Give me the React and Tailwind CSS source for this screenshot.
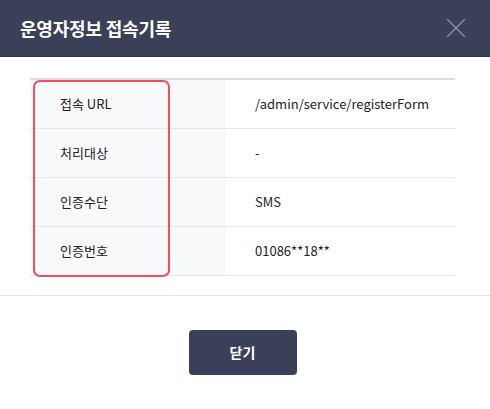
export default function App() {
  const rows = [
    ["접속 URL", "/admin/service/registerForm"],
    ["처리대상", "-"],
    ["인증수단", "SMS"],
    ["인증번호", "01086**18**"],
  ];
  const font = { fontFamily: '"Noto Sans CJK KR", "Noto Sans", sans-serif' };
  return (
    <div className="w-[490px] h-[409px] bg-white" style={font}>
      <div className="h-[57px] bg-[#3a4058] border-b border-[#2e3348] flex items-center justify-between pl-5 pr-[24px]">
        <h1 className="text-white text-[18px] font-bold tracking-[-0.2px]">운영자정보 접속기록</h1>
        <svg width="20" height="20" viewBox="0 0 20 20" className="block">
          <path d="M1 1 L19 19 M19 1 L1 19" stroke="#8d92a6" strokeWidth="1.4" fill="none" />
        </svg>
      </div>
      <div className="px-[30px] pt-[21px]">
        <div className="relative w-[425px] border-t-2 border-[#dcdcdc]">
          {rows.map(([k, v]) => (
            <div key={k} className="flex h-[49px] border-b border-[#e6e7ec]">
              <div className="w-[196px] bg-[#f8f9fb] flex items-center pl-[30px] text-[13px] text-[#222]">{k}</div>
              <div className="flex-1 flex items-center pl-[29px] text-[13px] text-[#222]">{v}</div>
            </div>
          ))}
          <div className="absolute left-[3px] top-[0px] w-[137px] h-[197px] border-2 border-[#ee4e5e] rounded-[7px]" />
        </div>
      </div>
      <div className="mt-[19px] border-t border-[#e3e3e6]" />
      <div className="flex justify-center pt-[34px] pr-[5px]">
        <button className="w-[108px] h-[45px] bg-[#3a4058] rounded-[4px] text-white text-[14px] font-bold">닫기</button>
      </div>
    </div>
  );
}
